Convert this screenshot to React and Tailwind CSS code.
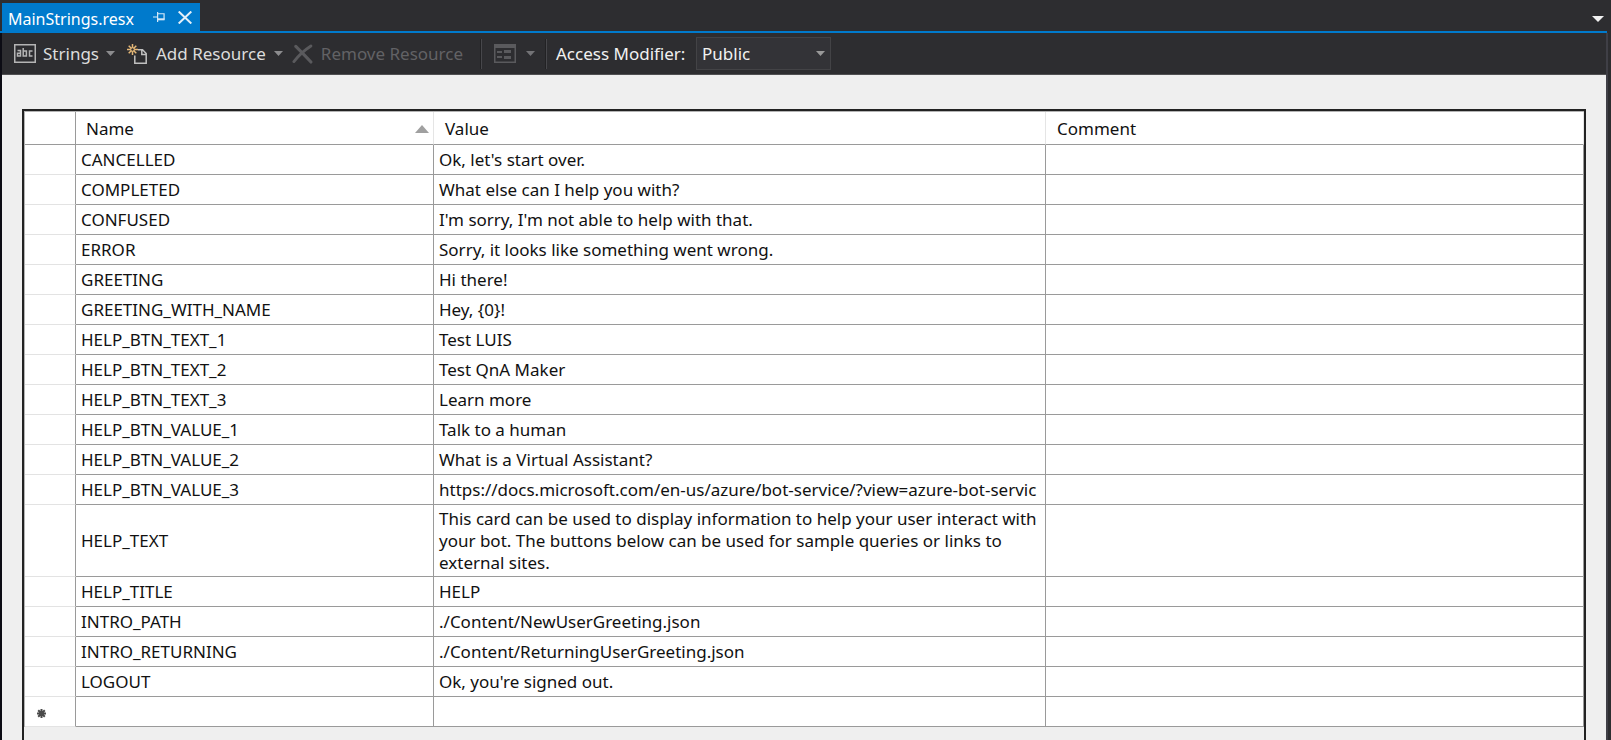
import React from "react";

const rows = [
  ["CANCELLED", "Ok, let's start over."],
  ["COMPLETED", "What else can I help you with?"],
  ["CONFUSED", "I'm sorry, I'm not able to help with that."],
  ["ERROR", "Sorry, it looks like something went wrong."],
  ["GREETING", "Hi there!"],
  ["GREETING_WITH_NAME", "Hey, {0}!"],
  ["HELP_BTN_TEXT_1", "Test LUIS"],
  ["HELP_BTN_TEXT_2", "Test QnA Maker"],
  ["HELP_BTN_TEXT_3", "Learn more"],
  ["HELP_BTN_VALUE_1", "Talk to a human"],
  ["HELP_BTN_VALUE_2", "What is a Virtual Assistant?"],
  ["HELP_BTN_VALUE_3", "https://docs.microsoft.com/en-us/azure/bot-service/?view=azure-bot-servic"],
  [
    "HELP_TEXT",
    "This card can be used to display information to help your user interact with your bot. The buttons below can be used for sample queries or links to external sites.",
  ],
  ["HELP_TITLE", "HELP"],
  ["INTRO_PATH", "./Content/NewUserGreeting.json"],
  ["INTRO_RETURNING", "./Content/ReturningUserGreeting.json"],
  ["LOGOUT", "Ok, you're signed out."],
];

function Caret({ className }) {
  return (
    <svg width="9" height="5" viewBox="0 0 9 5" className={className} aria-hidden="true">
      <path d="M0 0h9L4.500 5z" fill="currentColor" />
    </svg>
  );
}

function StringsIcon() {
  return (
    <svg width="22" height="19" viewBox="0 0 22 19" fill="none" stroke="#b4b4b4" aria-hidden="true">
      <rect x="0.750" y="0.750" width="20.500" height="17.500" strokeWidth="1.500" />
      <g strokeWidth="1.500">
        <path d="M3.500 6.500h3v5.500h-3v-2.700h3" />
        <path d="M9.200 4v8h3.200V7H9.200" />
        <path d="M18.500 7h-3v5h3" />
      </g>
    </svg>
  );
}

function AddIcon() {
  return (
    <svg width="20" height="20" viewBox="0 0 20 20" fill="none" aria-hidden="true">
      <g stroke="#e5b877" strokeWidth="1.500">
        <path d="M5.500 0v11M0 5.500h11M1.700 1.700l7.600 7.600M9.300 1.700L1.700 9.300" />
      </g>
      <circle cx="5.500" cy="5.500" r="1.700" fill="#2d2d30" stroke="#e5b877" />
      <path
        d="M7.800 11.500v7.700h11.400V9.500l-3.700-3.700h-4.500M14.800 6v4.500h4.400"
        stroke="#c0c0c0"
        strokeWidth="1.500"
      />
    </svg>
  );
}

function RemoveIcon() {
  return (
    <svg width="22" height="20" viewBox="0 0 22 20" fill="none" stroke="#5a5a5d" aria-hidden="true">
      <path d="M20 1.500C13 6 7 11.500 2 18" strokeWidth="3" strokeLinecap="round" />
      <path d="M4 2c4 4 10 10 16 16.500" strokeWidth="3.200" strokeLinecap="round" />
    </svg>
  );
}

function ViewIcon() {
  return (
    <svg width="22" height="19" viewBox="0 0 22 19" fill="none" aria-hidden="true">
      <rect x="0.750" y="0.750" width="20.500" height="17.500" stroke="#5a5a5d" strokeWidth="1.500" />
      <path d="M0 0h22v4H0z" fill="#5a5a5d" />
      <path d="M3 7h5v2H3zM10 6h7v3h-7zM3 12h5v2H3zM10 12h7v3h-7z" fill="#5a5a5d" />
    </svg>
  );
}

function Separator() {
  return <div className="h-[30px] w-[2px] shrink-0 border-l border-[#222224] bg-[#47474b]" />;
}

export default function App() {
  return (
    <div className="flex min-h-screen flex-col bg-[#2d2d30] font-['Noto_Sans','Open_Sans',sans-serif] text-[17px] leading-[22px]">
      <header className="mr-1 flex h-[33px] items-end justify-between border-b-2 border-[#007acc] pl-[2px]">
        <div className="flex h-7 items-center bg-[#007acc] pr-2 pl-[6px] text-white">
          <a href="#main" className="w-[145px] pt-1 text-base whitespace-nowrap">
            MainStrings.resx
          </a>
          <button type="button" aria-label="Pin tab" className="mr-[13px]">
            <svg width="12" height="12" viewBox="0 0 13 12" fill="none" stroke="#d5e9f7" aria-hidden="true">
              <path d="M0 6h5M5 0.500v11M5 2.500h7v6.500" strokeWidth="1.300" />
              <path d="M5 8.500h7.500" strokeWidth="2.200" />
            </svg>
          </button>
          <button type="button" aria-label="Close tab">
            <svg width="14" height="13" viewBox="0 0 14 13" stroke="#e3f0f9" strokeWidth="2" aria-hidden="true">
              <path d="M0.700 0.500l12.600 12M13.300 0.500l-12.600 12" />
            </svg>
          </button>
        </div>
        <button type="button" aria-label="Open documents" className="mr-[3px] mb-[9px] text-[#f1f1f1]">
          <svg width="12" height="6" viewBox="0 0 12 6" aria-hidden="true">
            <path d="M0 0h12L6 6z" fill="currentColor" />
          </svg>
        </button>
      </header>

      <div className="mr-[3px] flex flex-1 flex-col border-r-2 border-l-2 border-r-[#3f3f46] border-l-[#0c0c14]">
        <div className="flex h-[42px] shrink-0 items-center border-b border-[#505052] pl-3 whitespace-nowrap text-[#dcdcdc]">
          <button type="button" className="flex w-[101px] items-center">
            <StringsIcon />
            <span className="ml-[7px] flex-1 text-left">Strings</span>
            <Caret className="text-[#8c8c8e]" />
          </button>
          <button type="button" className="ml-3 flex w-[156px] items-center">
            <AddIcon />
            <span className="ml-[9px] flex-1 text-left">Add Resource</span>
            <Caret className="text-[#8c8c8e]" />
          </button>
          <button type="button" disabled className="ml-[9px] flex w-[171px] items-center text-[#626265]">
            <RemoveIcon />
            <span className="ml-2">Remove Resource</span>
          </button>
          <div className="ml-[17px] flex items-center">
            <Separator />
            <button type="button" disabled aria-label="View" className="mr-[10px] ml-3 flex items-center gap-[10px] text-[#737376]">
              <ViewIcon />
              <Caret />
            </button>
            <Separator />
          </div>
          <label htmlFor="access" className="ml-[9px] w-[140px] text-[#f1f1f1]">
            Access Modifier:
          </label>
          <div className="grid w-[135px] items-center">
            <select
              id="access"
              className="col-start-1 row-start-1 h-[33px] w-full appearance-none border border-[#434346] bg-[#333337] pl-[5px] text-[#f1f1f1]"
            >
              <option>Public</option>
            </select>
            <Caret className="pointer-events-none col-start-1 row-start-1 mr-[6px] justify-self-end text-[#999999]" />
          </div>
        </div>

        <main id="main" className="flex flex-1 flex-col bg-[#efefef] px-5 pt-[34px]">
          <div className="flex-1 border-2 border-b-0 border-[#222222]">
            <table className="w-full table-fixed border-separate border-spacing-0 border-t border-l border-[#b4b4b4] text-left text-[#111111]">
              <colgroup>
                <col className="w-[51px]" />
                <col className="w-[358px]" />
                <col className="w-[612px]" />
                <col />
              </colgroup>
              <thead>
                <tr className="h-[33px] bg-white">
                  <th className="border-r border-b border-[#9a9a9a]" aria-label="Row" />
                  <th className="border-r border-b border-r-[#e5e5e5] border-b-[#9a9a9a] pt-[2px] pr-1 pl-[10px] font-normal">
                    <div className="flex items-center justify-between">
                      Name
                      <svg width="14" height="8" viewBox="0 0 14 8" aria-hidden="true">
                        <path d="M7 0l7 8H0z" fill="#a0a0a0" />
                      </svg>
                    </div>
                  </th>
                  <th className="border-r border-b border-r-[#e5e5e5] border-b-[#9a9a9a] pt-[2px] pl-[11px] font-normal">Value</th>
                  <th className="border-r border-b border-r-[#e5e5e5] border-b-[#9a9a9a] pt-[2px] pl-[11px] font-normal">Comment</th>
                </tr>
              </thead>
              <tbody>
                {rows.map(([name, value]) => {
                  const long = name === "HELP_TEXT";
                  return (
                    <tr key={name} className="h-[30px] bg-white">
                      <td className="border-r border-b border-r-[#9a9a9a] border-b-[#e3e3e3]" />
                      <td className="overflow-hidden border-r border-b border-[#9a9a9a] pl-[5px]">{name}</td>
                      <td
                        className={
                          long
                            ? "border-r border-b border-[#9a9a9a] px-[5px] pt-[3px] pb-[2px]"
                            : "overflow-hidden border-r border-b border-[#9a9a9a] pl-[5px] whitespace-nowrap"
                        }
                      >
                        {value}
                      </td>
                      <td className="border-r border-b border-[#9a9a9a]" />
                    </tr>
                  );
                })}
                <tr className="h-[30px] bg-white">
                  <td className="border-r border-b border-r-[#9a9a9a] border-b-[#e3e3e3] pt-1 pl-3">
                    <svg width="9" height="9" viewBox="0 0 9 9" stroke="#4a4a4a" strokeWidth="2" aria-label="New row">
                      <path d="M4.500 0v9M0 4.500h9M1.200 1.200l6.600 6.600M7.800 1.200L1.200 7.800" />
                    </svg>
                  </td>
                  <td className="border-r border-b border-[#9a9a9a]" />
                  <td className="border-r border-b border-[#9a9a9a]" />
                  <td className="border-r border-b border-[#9a9a9a]" />
                </tr>
              </tbody>
            </table>
          </div>
        </main>
      </div>
    </div>
  );
}
